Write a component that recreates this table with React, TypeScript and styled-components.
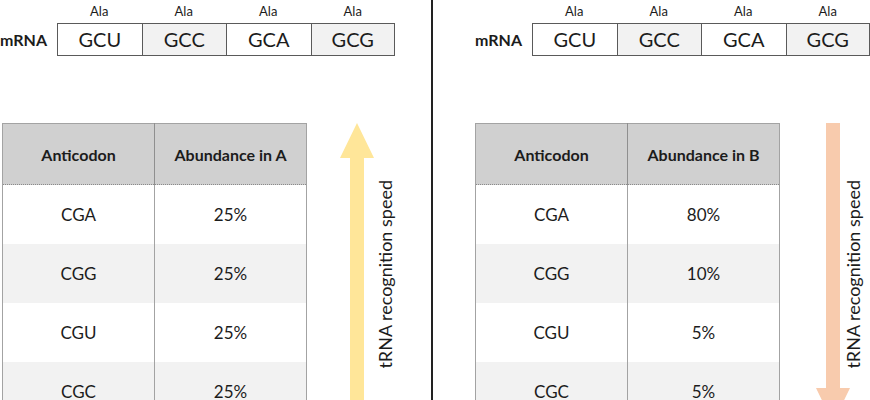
import React from 'react';
import styled, { createGlobalStyle } from 'styled-components';

const GlobalStyle = createGlobalStyle`
  html, body {
    margin: 0;
    padding: 0;
    background: #fff;
  }
  body {
    font-family: Lato, "Open Sans", sans-serif;
    color: #1c1c1c;
  }
`;

const Page = styled.div`
  display: flex;
  width: 870px;
  height: 400px;
  overflow: hidden;
  background: #fff;
`;

const Panel = styled.section<{ $width?: number; $pad: number }>`
  flex: ${(p) => (p.$width ? 'none' : '1')};
  width: ${(p) => (p.$width ? `${p.$width}px` : 'auto')};
  padding-left: ${(p) => p.$pad}px;
  display: flex;
  flex-direction: column;
`;

const Divider = styled.div`
  flex: none;
  width: 2px;
  height: 100%;
  background: #222;
`;

const CodonBlock = styled.div<{ $indent: number }>`
  display: flex;
  align-items: flex-end;
  padding-left: ${(p) => p.$indent}px;
`;

const StrandLabel = styled.div`
  width: 47px;
  margin-right: 10px;
  height: 33px;
  line-height: 33px;
  text-align: right;
  font-weight: 700;
  font-size: 16px;
`;

const Strip = styled.div`
  display: grid;
  grid-template-columns: repeat(4, 84.5px);
`;

const CodonCol = styled.div`
  display: flex;
  flex-direction: column;
`;

const AminoAcid = styled.div`
  height: 23px;
  line-height: 23px;
  text-align: center;
  font-size: 13px;
`;

const Codon = styled.div<{ $shade: boolean; $last: boolean }>`
  box-sizing: border-box;
  height: 33px;
  line-height: 31px;
  border: 1px solid #5a5a5a;
  border-right: ${(p) => (p.$last ? '1px solid #5a5a5a' : 'none')};
  background: ${(p) => (p.$shade ? '#f2f2f2' : '#fff')};
  text-align: center;
  font-size: 20px;
`;

const Lower = styled.div<{ $indent: number }>`
  display: flex;
  align-items: flex-start;
  margin-top: 67px;
  padding-left: ${(p) => p.$indent}px;
`;

const Table = styled.table`
  flex: none;
  width: 305px;
  border-collapse: collapse;
  table-layout: fixed;
  border: 1px solid #a3a3a3;
`;

const Th = styled.th`
  height: 58px;
  background: #d0d0d0;
  font-weight: 700;
  font-size: 16px;
  text-align: center;
  border-bottom: 1px dotted #8a8a8a;
  & + & {
    border-left: 1px solid #8f8f8f;
  }
`;

const Tr = styled.tr<{ $shade: boolean }>`
  background: ${(p) => (p.$shade ? '#f2f2f2' : '#fff')};
`;

const Td = styled.td`
  height: 59px;
  padding: 0;
  text-align: center;
  font-size: 17px;
  & + & {
    border-left: 1px solid #a3a3a3;
  }
`;

const Side = styled.div<{ $gap: number }>`
  display: flex;
  align-items: center;
  height: 300px;
  margin-left: ${(p) => p.$gap}px;
`;

const SideLabel = styled.div<{ $offset: number }>`
  writing-mode: vertical-rl;
  transform: rotate(180deg);
  font-size: 18px;
  line-height: 20px;
  margin-left: ${(p) => p.$offset}px;
  margin-top: 2px;
  white-space: nowrap;
`;

const SpeedArrow: React.FC<{ dir: 'up' | 'down'; color: string }> = ({ dir, color }) => {
  const pts =
    dir === 'up'
      ? '17,0 34,35 24,35 24,300 10,300 10,35 0,35'
      : '10,0 24,0 24,265 34,265 17,300 0,265 10,265';
  return (
    <svg width="34" height="300" viewBox="0 0 34 300">
      <polygon points={pts} fill={color} />
    </svg>
  );
};

const codons = ['GCU', 'GCC', 'GCA', 'GCG'];

type Row = [string, string];

const Half: React.FC<{
  width?: number;
  pad: number;
  codonIndent: number;
  tableIndent: number;
  which: string;
  rows: Row[];
  dir: 'up' | 'down';
  color: string;
  gap: number;
  labelOffset: number;
}> = ({ width, pad, codonIndent, tableIndent, which, rows, dir, color, gap, labelOffset }) => (
  <Panel $width={width} $pad={pad}>
    <CodonBlock $indent={codonIndent}>
      <StrandLabel>mRNA</StrandLabel>
      <Strip>
        {codons.map((c, i) => (
          <CodonCol key={c}>
            <AminoAcid>Ala</AminoAcid>
            <Codon $shade={i % 2 === 1} $last={i === codons.length - 1}>
              {c}
            </Codon>
          </CodonCol>
        ))}
      </Strip>
    </CodonBlock>
    <Lower $indent={tableIndent}>
      <Table>
        <thead>
          <tr>
            <Th>Anticodon</Th>
            <Th>Abundance in {which}</Th>
          </tr>
        </thead>
        <tbody>
          {rows.map(([a, b], i) => (
            <Tr key={a} $shade={i % 2 === 1}>
              <Td>{a}</Td>
              <Td>{b}</Td>
            </Tr>
          ))}
        </tbody>
      </Table>
      <Side $gap={gap}>
        <SpeedArrow dir={dir} color={color} />
        <SideLabel $offset={labelOffset}>tRNA recognition speed</SideLabel>
      </Side>
    </Lower>
  </Panel>
);

export default function App() {
  return (
    <>
      <GlobalStyle />
      <Page>
        <Half
          width={431}
          pad={0}
          codonIndent={0}
          tableIndent={2}
          which="A"
          rows={[
            ['CGA', '25%'],
            ['CGG', '25%'],
            ['CGU', '25%'],
            ['CGC', '25%'],
          ]}
          dir="up"
          color="#ffe699"
          gap={33}
          labelOffset={1}
        />
        <Divider />
        <Half
          pad={42}
          codonIndent={0}
          tableIndent={0}
          which="B"
          rows={[
            ['CGA', '80%'],
            ['CGG', '10%'],
            ['CGU', '5%'],
            ['CGC', '5%'],
          ]}
          dir="down"
          color="#f8cbad"
          gap={36}
          labelOffset={-7}
        />
      </Page>
    </>
  );
}
